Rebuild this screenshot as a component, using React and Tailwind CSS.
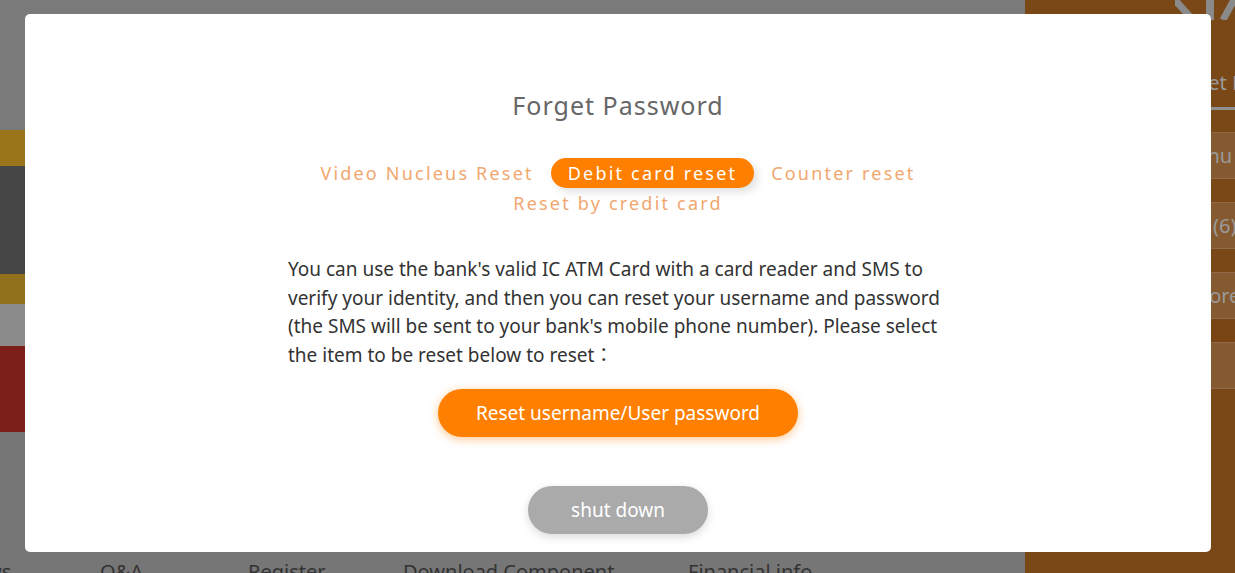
import { useState } from "react";

const tabs = ["Video Nucleus Reset", "Debit card reset", "Counter reset", "Reset by credit card"];

export default function App() {
  const [active, setActive] = useState(1);
  const [open, setOpen] = useState(true);

  return (
    <div className="relative flex h-[573px] w-[1235px] overflow-hidden font-['Noto_Sans','Noto_Sans_CJK_TC',sans-serif]">
      {/* page behind the dialog */}
      <div className="flex flex-1 flex-col bg-[#767676]">
        <div className="flex h-[432px] flex-col">
          <div className="h-[130px] bg-[#7a7a7a]" />
          <div className="h-[36px] bg-[#9b7519]" />
          <div className="h-[108px] bg-[#464646]" />
          <div className="h-[30px] bg-[#92711c]" />
          <div className="h-[42px] bg-[#8b8b8b]" />
          <div className="flex-1 bg-[#7c1e19]" />
        </div>
        <div className="flex-1" />
        <nav className="flex h-[15px] items-start whitespace-nowrap text-[20px] leading-[28px] text-[#333]">
          <span className="-ml-[40px] w-[140px]">News</span>
          <span className="w-[148px]">Q&amp;A</span>
          <span className="w-[155px]">Register</span>
          <span className="w-[285px]">Download Component</span>
          <span>Financial info</span>
        </nav>
      </div>

      <aside className="flex w-[210px] flex-col bg-[#7a4816] text-[20px] text-[#9a9a9a]">
        <svg className="ml-[150px] h-[20px] w-[60px]" viewBox="0 0 60 20">
          <path d="M0 0 L18 20" stroke="#8a8a8a" strokeWidth="7" fill="none" />
          <rect x="31" y="0" width="8" height="20" fill="#8a8a8a" />
          <path d="M60 -2 L48 20" stroke="#8a8a8a" strokeWidth="7" fill="none" />
        </svg>
        <div className="mt-[48px] whitespace-nowrap pl-[125px] leading-[30px]">Internet E-Bank</div>
        <div className="mt-[9px] ml-[186px] h-[3px] bg-[#8f8f8f]" />
        <div className="mt-[22px] flex h-[47px] items-center whitespace-nowrap border-y border-[#8e6a48] bg-[#865a30] pl-[153px]">Menu</div>
        <div className="mt-[23px] flex h-[47px] items-center whitespace-nowrap border-y border-[#8e6a48] bg-[#865a30] pl-[188px]">(6)</div>
        <div className="mt-[23px] flex h-[47px] items-center whitespace-nowrap border-y border-[#8e6a48] bg-[#865a30] pl-[166px]">More</div>
        <div className="h-[23px] bg-[#784413]" />
        <div className="flex h-[47px] items-center border-y border-[#8e6a48] bg-[#865a30]" />
      </aside>

      {/* dialog */}
      {open && (
        <div className="absolute left-[25px] top-[14px] flex h-[538px] w-[1186px] flex-col items-center rounded-[5px] bg-white">
          <h2 className="mt-[75px] text-[25px] leading-[32px] tracking-[1px] text-[#666]">Forget Password</h2>

          <div className="mt-[37px] flex w-[660px] flex-wrap justify-center">
            {tabs.map((t, i) => (
              <button
                key={t}
                onClick={() => setActive(i)}
                className={
                  i === active
                    ? "h-[30px] rounded-full bg-[#ff8000] px-[17px] text-[18px] leading-[30px] tracking-[2.2px] text-white shadow-[4px_4px_8px_rgba(0,0,0,0.12)]"
                    : "h-[30px] px-[17px] text-[18px] leading-[30px] tracking-[2.2px] text-[#f0a76f]"
                }
              >
                {t}
              </button>
            ))}
          </div>

          <p className="mt-[37px] w-[660px] text-[19px] leading-[28.5px] text-[#333]">
            You can use the bank's valid IC ATM Card with a card reader and SMS to verify your identity, and then you
            can reset your username and password (the SMS will be sent to your bank's mobile phone number). Please
            select the item to be reset below to reset：
          </p>

          <button className="mt-[20px] h-[48px] w-[360px] rounded-full bg-[#ff8000] text-[19px] text-white shadow-[0_2px_10px_rgba(255,128,0,0.45)]">
            Reset username/User password
          </button>

          <button
            onClick={() => setOpen(false)}
            className="mt-[49px] h-[48px] w-[180px] rounded-full bg-[#aaaaaa] text-[19px] text-white shadow-[0_3px_10px_rgba(0,0,0,0.15)]"
          >
            shut down
          </button>
        </div>
      )}
    </div>
  );
}
